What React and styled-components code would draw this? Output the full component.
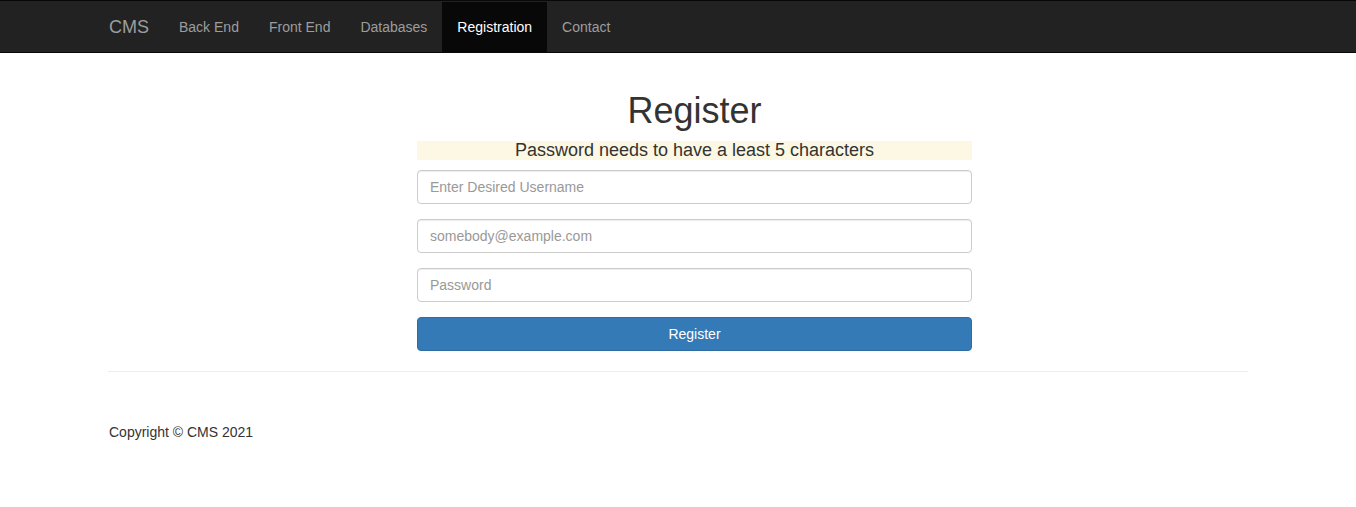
import React from 'react';
import styled, { createGlobalStyle } from 'styled-components';

const GlobalStyle = createGlobalStyle`
  * { box-sizing: border-box; }
  body {
    margin: 0;
    font-family: "Liberation Sans", Arial, Helvetica, sans-serif;
    font-size: 14px;
    line-height: 1.42857143;
    color: #333;
    background: #fff;
  }
`;

const Navbar = styled.nav`
  background-color: #222;
  border-top: 1px solid #080808;
  border-bottom: 1px solid #080808;
  height: 53px;
`;

const Container = styled.div`
  width: 1170px;
  margin: 0 auto;
  padding: 0 15px;
`;

const NavInner = styled(Container)`
  display: flex;
  height: 51px;
  padding-top: 1px;
  padding-left: 16px;
`;

const Brand = styled.a`
  margin-left: -15px;
  padding: 15px;
  font-size: 18px;
  line-height: 20px;
  color: #9d9d9d;
  text-decoration: none;
`;

const NavList = styled.ul`
  display: flex;
  list-style: none;
  margin: 0;
  padding: 0;
`;

const NavLink = styled.a`
  display: block;
  height: 50px;
  padding: 15px;
  line-height: 20px;
  color: ${(p) => (p.$active ? '#fff' : '#9d9d9d')};
  background-color: ${(p) => (p.$active ? '#080808' : 'transparent')};
  text-decoration: none;
`;

const Main = styled(Container)`
  padding-top: 18px;
`;

const FormColumn = styled.div`
  width: 555px;
  margin-left: 309px;
`;

const Title = styled.h1`
  margin: 20px 0 10px;
  font-size: 36px;
  font-weight: 500;
  line-height: 1.1;
  text-align: center;
  color: #333;
`;

const Warning = styled.h4`
  margin: 10px 0;
  font-size: 18px;
  font-weight: 500;
  line-height: 1.1;
  text-align: center;
  background-color: #fcf8e3;
  color: #333;
`;

const FormGroup = styled.div`
  margin-bottom: 15px;
`;

const Input = styled.input`
  display: block;
  width: 100%;
  height: 34px;
  padding: 6px 12px;
  font-family: inherit;
  font-size: 14px;
  line-height: 1.42857143;
  color: #555;
  background-color: #fff;
  border: 1px solid #ccc;
  border-radius: 4px;
  box-shadow: inset 0 1px 1px rgba(0, 0, 0, 0.075);
  outline: none;
  &::placeholder {
    color: #999;
  }
`;

const Button = styled.button`
  display: block;
  width: 100%;
  height: 34px;
  padding: 6px 12px;
  font-family: inherit;
  font-size: 14px;
  line-height: 1.42857143;
  color: #fff;
  background-color: #337ab7;
  border: 1px solid #2e6da4;
  border-radius: 4px;
  cursor: pointer;
`;

const Rule = styled.hr`
  margin: 20px 0 0;
  border: 0;
  border-top: 1px solid #eee;
`;

const Footer = styled.footer`
  margin: 50px 0;
  p {
    margin: 0 0 10px;
    padding-left: 1px;
  }
`;

const links = ['Back End', 'Front End', 'Databases', 'Registration', 'Contact'];

export default function App() {
  return (
    <>
      <GlobalStyle />
      <Navbar>
        <NavInner>
          <Brand href="#">CMS</Brand>
          <NavList>
            {links.map((l) => (
              <li key={l}>
                <NavLink href="#" $active={l === 'Registration'}>
                  {l}
                </NavLink>
              </li>
            ))}
          </NavList>
        </NavInner>
      </Navbar>
      <Main>
        <FormColumn>
          <Title>Register</Title>
          <Warning>Password needs to have a least 5 characters</Warning>
          <form onSubmit={(e) => e.preventDefault()}>
            <FormGroup>
              <Input type="text" placeholder="Enter Desired Username" />
            </FormGroup>
            <FormGroup>
              <Input type="email" placeholder="somebody@example.com" />
            </FormGroup>
            <FormGroup>
              <Input type="password" placeholder="Password" />
            </FormGroup>
            <Button type="submit">Register</Button>
          </form>
        </FormColumn>
        <Rule />
        <Footer>
          <p>Copyright © CMS 2021</p>
        </Footer>
      </Main>
    </>
  );
}
